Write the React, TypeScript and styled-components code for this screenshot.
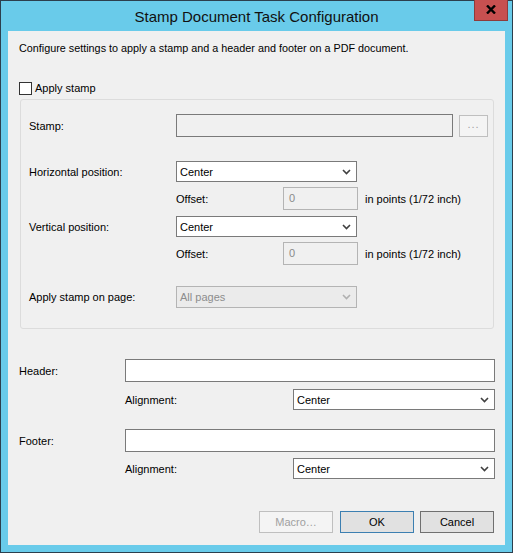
import React from 'react';
import styled, { createGlobalStyle } from 'styled-components';

const GlobalStyle = createGlobalStyle`
  html, body {
    margin: 0;
    padding: 0;
    background: #69cbea;
  }
  body {
    font-family: 'Liberation Sans', Arial, sans-serif;
    font-size: 11px;
    color: #000;
  }
`;

const Chevron = ({ disabled }: { disabled?: boolean }) => (
  <svg width="9" height="6" viewBox="0 0 9 6">
    <path
      d="M1 1 L4.5 4.5 L8 1"
      fill="none"
      stroke={disabled ? '#b0b0b0' : '#404040'}
      strokeWidth="1.6"
    />
  </svg>
);

const CloseGlyph = () => (
  <svg width="10" height="9" viewBox="0 0 10 9">
    <path d="M1 0.5 L9 8.5 M9 0.5 L1 8.5" stroke="#000" strokeWidth="2.4" />
  </svg>
);

const Select = ({ value, width, disabled }: { value: string; width: number; disabled?: boolean }) => (
  <SelectBox $width={width} $disabled={disabled}>
    <SelectValue $disabled={disabled}>{value}</SelectValue>
    <SelectArrow>
      <Chevron disabled={disabled} />
    </SelectArrow>
  </SelectBox>
);

const OffsetLine = () => (
  <OffsetRow>
    <OffsetLabel>Offset:</OffsetLabel>
    <TextBox $width={75} $disabled>
      0
    </TextBox>
    <Hint>in points (1/72 inch)</Hint>
  </OffsetRow>
);

export default function App() {
  return (
    <>
      <GlobalStyle />
      <Window>
        <TitleBar>
          <span />
          <Title>Stamp Document Task Configuration</Title>
          <CloseButton>
            <CloseGlyph />
          </CloseButton>
        </TitleBar>
        <Client>
          <Description>
            Configure settings to apply a stamp and a header and footer on a PDF document.
          </Description>
          <CheckRow>
            <CheckBox />
            <span>Apply stamp</span>
          </CheckRow>
          <Group>
            <Row $mt={14} $h={23}>
              <GroupLabel>Stamp:</GroupLabel>
              <TextBox $width={277} $dark $disabled />
              <BrowseButton>...</BrowseButton>
            </Row>
            <Row $mt={24} $h={21}>
              <GroupLabel>Horizontal position:</GroupLabel>
              <Select value="Center" width={181} />
            </Row>
            <Row $mt={5} $h={23}>
              <GroupLabel />
              <OffsetLine />
            </Row>
            <Row $mt={6} $h={21}>
              <GroupLabel>Vertical position:</GroupLabel>
              <Select value="Center" width={181} />
            </Row>
            <Row $mt={5} $h={23}>
              <GroupLabel />
              <OffsetLine />
            </Row>
            <Row $mt={21} $h={22}>
              <GroupLabel>Apply stamp on page:</GroupLabel>
              <Select value="All pages" width={181} disabled />
            </Row>
          </Group>
          <Section>
            <Row $mt={0} $h={23}>
              <SectionLabel>Header:</SectionLabel>
              <TextBox $width={370} />
            </Row>
            <Row $mt={7} $h={21}>
              <SectionLabel />
              <AlignLabel>Alignment:</AlignLabel>
              <Select value="Center" width={202} />
            </Row>
            <Row $mt={19} $h={23}>
              <SectionLabel>Footer:</SectionLabel>
              <TextBox $width={370} />
            </Row>
            <Row $mt={6} $h={21}>
              <SectionLabel />
              <AlignLabel>Alignment:</AlignLabel>
              <Select value="Center" width={202} />
            </Row>
          </Section>
          <ButtonBar>
            <DialogButton $variant="disabled">Macro…</DialogButton>
            <DialogButton $variant="default">OK</DialogButton>
            <DialogButton>Cancel</DialogButton>
          </ButtonBar>
        </Client>
      </Window>
    </>
  );
}

const Window = styled.div`
  width: 513px;
  height: 553px;
  box-sizing: border-box;
  border: 1px solid #2c3f4d;
  background: #69cbea;
  display: flex;
  flex-direction: column;
`;

const TitleBar = styled.div`
  height: 30px;
  display: grid;
  grid-template-columns: 1fr auto 1fr;
  align-items: center;
`;

const Title = styled.div`
  font-size: 15px;
  color: #111;
  padding-top: 1px;
`;

const CloseButton = styled.div`
  justify-self: end;
  align-self: start;
  margin-top: -1px;
  margin-right: 4px;
  width: 34px;
  height: 21px;
  box-sizing: border-box;
  background: #c75050;
  border: 1px solid #8e3b3b;
  border-top: none;
  display: flex;
  align-items: center;
  justify-content: center;
  padding-bottom: 1px;
`;

const Client = styled.div`
  flex: 1;
  margin: 0 7px 7px;
  background: #f0f0f0;
  padding-top: 10px;
  display: flex;
  flex-direction: column;
`;

const Description = styled.div`
  padding-left: 11px;
  line-height: 14px;
  font-size: 10.8px;
`;

const CheckRow = styled.div`
  margin-top: 26px;
  padding-left: 11px;
  display: flex;
  align-items: center;
  gap: 3px;
  height: 14px;
`;

const CheckBox = styled.span`
  width: 13px;
  height: 13px;
  box-sizing: border-box;
  border: 1px solid #333;
  background: #fff;
`;

const Group = styled.div`
  margin: 4px 11px 0 12px;
  height: 230px;
  box-sizing: border-box;
  border: 1px solid #dcdcdc;
  border-radius: 3px;
  padding-left: 8px;
`;

const Row = styled.div<{ $mt: number; $h: number }>`
  margin-top: ${({ $mt }) => $mt}px;
  height: ${({ $h }) => $h}px;
  display: flex;
  align-items: center;
`;

const GroupLabel = styled.div`
  width: 147px;
  flex-shrink: 0;
`;

const SectionLabel = styled.div`
  width: 106px;
  flex-shrink: 0;
`;

const AlignLabel = styled.div`
  width: 168px;
  flex-shrink: 0;
`;

const TextBox = styled.div<{ $width: number; $disabled?: boolean; $dark?: boolean }>`
  width: ${({ $width }) => $width}px;
  height: 100%;
  box-sizing: border-box;
  border: 1px solid ${({ $disabled, $dark }) => ($disabled && !$dark ? '#b4b4b4' : '#7a7a7a')};
  background: ${({ $disabled }) => ($disabled ? '#f0f0f0' : '#fff')};
  color: #8a8a8a;
  padding: 3px 5px;
  line-height: 14px;
`;

const BrowseButton = styled.div`
  margin-left: 6px;
  width: 29px;
  height: 22px;
  box-sizing: border-box;
  border: 1px solid #bfbfbf;
  background: #f4f4f4;
  color: #a0a0a0;
  display: flex;
  align-items: center;
  justify-content: center;
  letter-spacing: 1px;
  padding-bottom: 3px;
`;

const SelectBox = styled.div<{ $width: number; $disabled?: boolean }>`
  width: ${({ $width }) => $width}px;
  height: 100%;
  box-sizing: border-box;
  border: 1px solid ${({ $disabled }) => ($disabled ? '#b4b4b4' : '#7a7a7a')};
  background: ${({ $disabled }) => ($disabled ? '#ebebeb' : '#fff')};
  display: flex;
  align-items: center;
`;

const SelectValue = styled.div<{ $disabled?: boolean }>`
  flex: 1;
  padding-left: 3px;
  color: ${({ $disabled }) => ($disabled ? '#8d8d8d' : '#000')};
`;

const SelectArrow = styled.div`
  width: 17px;
  height: 100%;
  display: flex;
  align-items: center;
  justify-content: center;
  padding-right: 1px;
`;

const OffsetRow = styled.div`
  display: flex;
  align-items: center;
  height: 100%;
`;

const OffsetLabel = styled.div`
  width: 107px;
`;

const Hint = styled.div`
  margin-left: 7px;
`;

const Section = styled.div`
  margin-top: 30px;
  padding-left: 11px;
  display: flex;
  flex-direction: column;
`;

const ButtonBar = styled.div`
  margin-top: 32px;
  padding-right: 11px;
  display: flex;
  justify-content: flex-end;
  gap: 6px;
`;

const DialogButton = styled.div<{ $variant?: 'default' | 'disabled' }>`
  width: 74px;
  height: 22px;
  box-sizing: border-box;
  display: flex;
  align-items: center;
  justify-content: center;
  border: 1px solid
    ${({ $variant }) =>
      $variant === 'default' ? '#3c7fb1' : $variant === 'disabled' ? '#bfbfbf' : '#707070'};
  background: ${({ $variant }) => ($variant === 'disabled' ? '#f4f4f4' : '#e1e1e1')};
  color: ${({ $variant }) => ($variant === 'disabled' ? '#a0a0a0' : '#000')};
  &:first-child {
    margin-right: 1px;
  }
`;
